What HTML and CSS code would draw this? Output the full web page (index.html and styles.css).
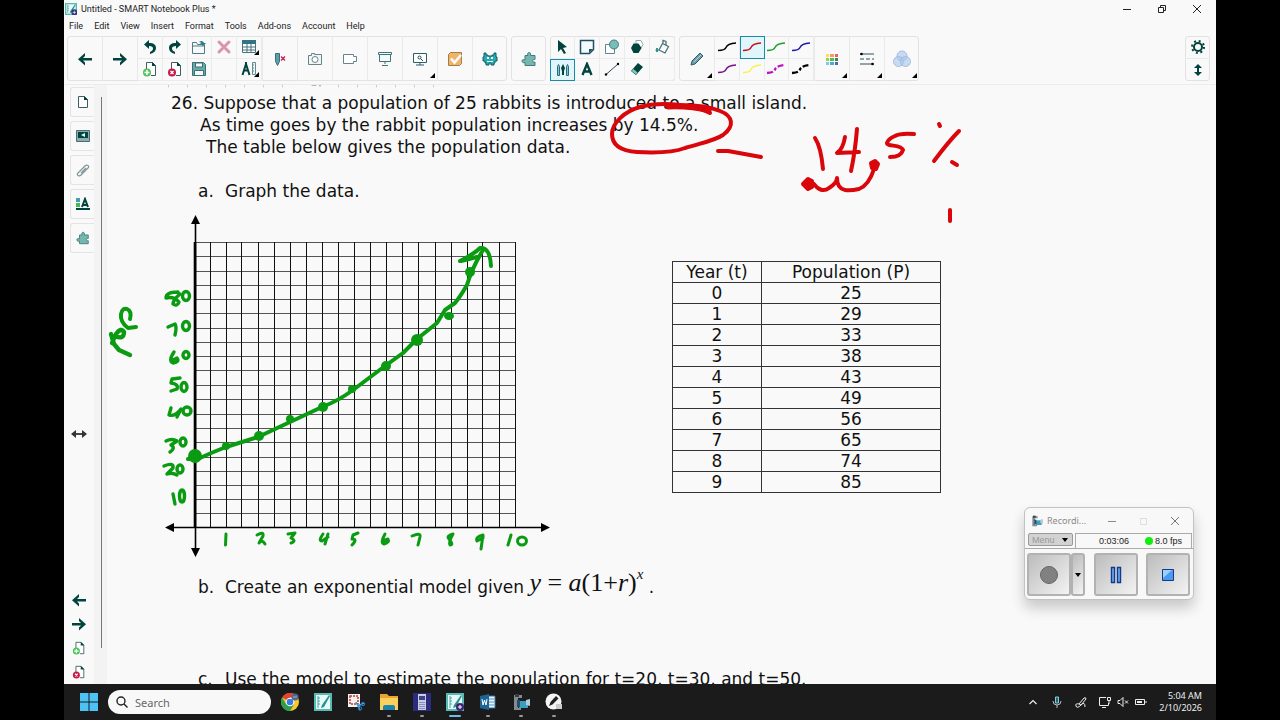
FILE: index.html
```html
<!DOCTYPE html>
<html lang="en">
<head>
<meta charset="utf-8">
<title>Untitled - SMART Notebook Plus *</title>
<link rel="stylesheet" href="styles.css">
</head>
<body>
<svg class="defs" aria-hidden="true">
  <defs>
    <symbol id="left" viewBox="0 0 14 14"><path d="M7 1v3L5 6h9v2.600H5l2 2v3L0 7.300z" fill="#01433d"/></symbol>
    <symbol id="right" viewBox="0 0 14 14"><path d="M7 1v3l2 2H0v2.600h9l-2 2v3l7-6.300z" fill="#01433d"/></symbol>
    <symbol id="undo" viewBox="0 0 16 16"><path d="M7 1v3c5 0 7 2 7 5s-2 5-6 6v-2c2-1 3-2 3-3.500S10 7 7 7v3L2 5.500z" fill="#01433d"/></symbol>
    <symbol id="page-add" viewBox="0 0 16 16"><path d="M4.500 8V1.500h6l3 3v10H9" fill="#fff" stroke="#3d5f62"/><path d="M10 1v4h4z" fill="#01433d"/><circle cx="5" cy="11.500" r="4" fill="#4fc35c"/><path d="M5 9v5M2.500 11.500h5" stroke="#fff" stroke-width="1.500"/></symbol>
    <symbol id="page-del" viewBox="0 0 16 16"><path d="M4.500 8V1.500h6l3 3v10H9" fill="#fff" stroke="#3d5f62"/><path d="M10 1v4h4z" fill="#01433d"/><circle cx="5" cy="11.500" r="4" fill="#c9184a"/><path d="M3.500 10l3 3M6.500 10l-3 3" stroke="#fff" stroke-width="1.400"/></symbol>
    <symbol id="squiggle" viewBox="0 0 20 12"><path d="M1 9.500C5 9.500 8 9 9 6.500S13 2.500 19 2" fill="none" stroke="currentColor" stroke-width="1.500"/></symbol>
    <symbol id="squiggle-thick" viewBox="0 0 20 12"><path d="M1 10C5 9.500 8 9 9 6.500S13 2.500 19 2" fill="none" stroke="currentColor" stroke-width="2.300" stroke-dasharray="6 2 3 2"/></symbol>
    <symbol id="notebook" viewBox="0 0 18 18"><path d="M0 0h18v18H0z" fill="#59b9b4"/><path d="M2 2h14v14H2z" fill="#e6fbf8"/><path d="M4 3v12M4 5h2M4 8h2M4 11h2" stroke="#46a39f"/><path d="M15 2L8 12l-1 3 3-1 6-11z" fill="#2d8f92"/></symbol>
    <symbol id="recorder" viewBox="0 0 18 18"><path d="M2 2h8v3H6v10h3v2H2z" fill="#7f8c92"/><path d="M3 1h4v3H3z" fill="#333f45"/><path d="M7 8h9v7H7z" fill="#3c9cc2"/><path d="M5 7h3v7H5z" fill="#284f5f"/><path d="M14 7l4-1v7l-4-1z" fill="#b3cdd6"/></symbol>
  </defs>
</svg>
<div class="desktop">
  <header class="titlebar">
    <svg class="i12" viewBox="0 0 18 18"><use href="#notebook"/><circle cx="14" cy="14" r="4.500" fill="#30307c"/><path d="M14 11.500v5M11.500 14h5" stroke="#fff"/></svg>
    <h1 class="title">Untitled - SMART Notebook Plus *</h1>
    <div class="window-buttons">
      <button class="bare" aria-label="Minimize"><svg class="i10" viewBox="0 0 10 10"><path d="M1 5.500h8" stroke="#222"/></svg></button>
      <button class="bare" aria-label="Restore"><svg class="i10" viewBox="0 0 10 10"><path d="M1.500 3.500h5v5h-5zM3.500 3V1.500h5v5H7" fill="none" stroke="#222"/></svg></button>
      <button class="bare" aria-label="Close"><svg class="i10" viewBox="0 0 10 10"><path d="M1 1l8 8M9 1L1 9" stroke="#222"/></svg></button>
    </div>
  </header>
  <nav class="menubar">
    <button class="bare">File</button><button class="bare">Edit</button><button class="bare">View</button><button class="bare">Insert</button><button class="bare">Format</button><button class="bare">Tools</button><button class="bare">Add-ons</button><button class="bare">Account</button><button class="bare">Help</button>
  </nav>
  <div class="toolbar">
    <div class="group">
      <button class="tool" aria-label="Previous page"><svg class="i14"><use href="#left"/></svg></button>
      <button class="tool" aria-label="Next page"><svg class="i14"><use href="#right"/></svg></button>
      <div class="pairs">
        <button class="tool" aria-label="Undo"><svg class="i16"><use href="#undo"/></svg></button>
        <button class="tool" aria-label="Redo"><svg class="i16 flip"><use href="#undo"/></svg></button>
        <button class="tool" aria-label="Open"><svg class="i16" viewBox="0 0 16 16"><path d="M1.500 14.500v-11h4l1 2h7v9zM1.500 7h12" fill="#f3fafa" stroke="#567a80"/><path d="M8 3c3-2 4-1 5 1h2l-3 3-3-3h2z" fill="#247f8e"/></svg></button>
        <button class="tool" aria-label="Delete"><svg class="i16" viewBox="0 0 16 16"><path d="M3 3l10 10M13 3L3 13" stroke="#dc93b2" stroke-width="3" stroke-linecap="round"/></svg></button>
        <button class="tool more" aria-label="Table"><svg class="i16" viewBox="0 0 16 16"><path d="M1.500 1.500h13v12h-13zM1.500 8h13M1.500 11h13M6 5v8M10 5v8" fill="#fff" stroke="#49727c"/><path d="M1 1h14v4H1z" fill="#2f7583"/></svg></button>
        <button class="tool" aria-label="Add page"><svg class="i16"><use href="#page-add"/></svg></button>
        <button class="tool" aria-label="Delete page"><svg class="i16"><use href="#page-del"/></svg></button>
        <button class="tool" aria-label="Save"><svg class="i16" viewBox="0 0 16 16"><path d="M1.500 1.500h11l2 2v11h-13z" fill="#69a9ab" stroke="#3d6e74"/><path d="M4.500 2h7v4h-7zM3.500 9.500h9v5h-9z" fill="#f4fafa" stroke="#3d6e74"/></svg></button>
        <span class="tool"></span>
        <button class="tool more" aria-label="Measurement tools"><svg class="i16" viewBox="0 0 16 16"><path d="M5 1v3M5 3L1.500 14M5 3l3.500 11M3 9.500h4" fill="none" stroke="#01433d" stroke-width="2"/><path d="M11.500 1.500h3v12h-3zM12 4h1M12 7h1M12 10h1" fill="#eaf4f4" stroke="#678b90"/></svg></button>
      </div>
      <button class="tool" aria-label="Clear ink"><svg class="i16" viewBox="0 0 16 16"><path d="M3.500 2.500h4v8l-2 4-2-4z" fill="#58a0aa" stroke="#3d6e74"/><path d="M9 5.500l4 4M13 5.500l-4 4" stroke="#c9184a" stroke-width="1.300"/></svg></button>
      <button class="tool" aria-label="Camera"><svg class="i16" viewBox="0 0 16 16"><path d="M1.500 4.500h3v-2h3v1h7v10h-13z" fill="#eff6f6" stroke="#668489"/><circle cx="8" cy="8.500" r="3" fill="#fff" stroke="#668489"/></svg></button>
      <button class="tool" aria-label="Page recorder"><svg class="i16" viewBox="0 0 16 16"><path d="M1.500 3.500h10v2h3v5h-3v2h-10z" fill="#fff" stroke="#668489"/></svg></button>
      <button class="tool" aria-label="Full screen"><svg class="i16" viewBox="0 0 16 16"><path d="M1.500 1.500h13v2h-13zM2.500 3.500h11v7h-11zM8 11v2M5 14.500h6" fill="#f4fbfb" stroke="#3f747c"/></svg></button>
      <button class="tool more" aria-label="Screen capture"><svg class="i16" viewBox="0 0 16 16"><path d="M1.500 2.500h13v9h-13zM4 14h8M8 12v2" fill="#fff" stroke="#2a5f68"/><circle cx="7.500" cy="6.500" r="1.500" fill="none" stroke="#194a53"/><path d="M9 8l2 2" stroke="#194a53"/></svg></button>
      <button class="tool" aria-label="Response"><svg class="i16" viewBox="0 0 16 16"><path d="M1.500 3.500l2-2h11v11l-2 2h-11z" fill="#eeb568" stroke="#a67b45"/><path d="M4 7.500l3.500 4L14 4" fill="none" stroke="#fff" stroke-width="2.500"/></svg></button>
      <button class="tool" aria-label="Game activities"><svg class="i16" viewBox="0 0 16 16"><path d="M2 2h2v2h2v1h4V4h2V2h2v4h1v4h-2v2h-1v2H9v-2H7v2H4v-2H3v-2H1V6h1z" fill="#22adb2" stroke="#155d67"/><path d="M5 6h2v2H5zM9 6h2v2H9zM5 10h6v1H5z" fill="#fff"/></svg></button>
    </div>
    <div class="group">
      <button class="tool" aria-label="Add-ons"><svg class="i16" viewBox="0 0 16 16"><path id="puzzle" d="M4 4.500h3c-2-4 4-4 2.500 0H14v4c-3-1-3 4 0 2.500v3.500H4v-3c-4 1.500-4-4.500 0-2.500z" fill="#75b7ae" stroke="#437c7e"/></svg></button>
    </div>
    <div class="group">
      <div class="pairs">
        <button class="tool" aria-label="Select"><svg class="i14" viewBox="0 0 14 14"><path d="M3 0l9 7-4 1 3 5-2 1-3-5-3 3z" fill="#01433d"/></svg></button>
        <button class="tool" aria-label="Screen shade"><svg class="i16" viewBox="0 0 16 16"><path d="M1.500 1.500h13v9l-4 4h-9z" fill="#f4fbfc" stroke="#1d5063" stroke-width="1.500"/><path d="M10 14v-4h4z" fill="#1d5063"/></svg></button>
        <button class="tool" aria-label="Shapes"><svg class="i16" viewBox="0 0 16 16"><path d="M1.500 5.500h9v9h-9z" fill="#fff" stroke="#668489"/><circle cx="10" cy="5.500" r="4.500" fill="#79bdbb" stroke="#437c7e"/></svg></button>
        <button class="tool" aria-label="Regular polygons"><svg class="i16" viewBox="0 0 16 16"><path d="M7 1.500h5l2 4-3 5H7z" fill="#fff" stroke="#93abb0"/><path d="M4.500 4.500h5l3 4.500-3 5h-5L2 9z" fill="#01433d"/></svg></button>
        <button class="tool" aria-label="Fill"><svg class="i16" viewBox="0 0 16 16"><path d="M8.500 4.500l6 3-3.500 6.500-6-3zM9 4V1.500l3 1V6" fill="#f6fbfb" stroke="#4d7278" stroke-width="1.300"/><path d="M3 9c-3 5 3 5 0 0" fill="#267f86" stroke="#267f86"/></svg></button>
        <button class="tool chosen" aria-label="Pens"><svg class="i16" viewBox="0 0 16 16"><path d="M2.500 13.500v-9l1-2 1 2v9zM11.500 13.500v-9l1-2 1 2v9z" fill="#87c5c8" stroke="#2a6b78"/><path d="M7 13V9l-1-3 2-4 2 4-1 3v4z" fill="#01433d"/></svg></button>
        <button class="tool" aria-label="Text"><svg class="i14" viewBox="0 0 14 14"><path d="M2.500 13L7 2l4.500 11M4 9.500h6" fill="none" stroke="#01433d" stroke-width="2.400"/></svg></button>
        <button class="tool" aria-label="Lines"><svg class="i16" viewBox="0 0 16 16"><path d="M2 13.500L14 3" stroke="#345" stroke-width="1"/><circle cx="2" cy="13.500" r="1.200"/><circle cx="14" cy="3" r="1.200"/></svg></button>
        <button class="tool" aria-label="Eraser"><svg class="i16" viewBox="0 0 16 16"><path d="M9 2l5 4-7 8-5-4z" fill="#01433d"/><path d="M4.500 8l4 3.500L7 13.500 2.500 10z" fill="#8ac2bd"/></svg></button>
        <span class="tool"></span>
      </div>
    </div>
    <div class="group">
      <button class="tool more" aria-label="Pen type"><svg class="i16" viewBox="0 0 16 16"><path d="M2 14l1-4 8-8 3 3-8 8z" fill="#699fa9" stroke="#315b67"/><path d="M5 11l7-7" stroke="#b4d4da"/></svg></button>
      <div class="pairs four">
        <button class="tool" aria-label="Black pen"><svg class="stroke black"><use href="#squiggle"/></svg></button>
        <button class="tool chosen" aria-label="Red pen"><svg class="stroke red"><use href="#squiggle"/></svg></button>
        <button class="tool" aria-label="Green pen"><svg class="stroke green"><use href="#squiggle"/></svg></button>
        <button class="tool" aria-label="Blue pen"><svg class="stroke blue"><use href="#squiggle"/></svg></button>
        <button class="tool" aria-label="Purple pen"><svg class="stroke purple"><use href="#squiggle"/></svg></button>
        <button class="tool" aria-label="Yellow highlighter"><svg class="stroke yellow"><use href="#squiggle"/></svg></button>
        <button class="tool" aria-label="Magenta dashed pen"><svg class="stroke magenta"><use href="#squiggle-thick"/></svg></button>
        <button class="tool" aria-label="Black dashed pen"><svg class="stroke black"><use href="#squiggle-thick"/></svg></button>
      </div>
      <button class="tool more" aria-label="Colour"><svg class="i14" viewBox="0 0 14 14"><path d="M1 2h3v3H1z" fill="#f6e05b"/><path d="M5 2h4v3H5z" fill="#f59a70"/><path d="M10 2h3v3h-3z" fill="#e8606d"/><path d="M1 6h3v3H1z" fill="#96d24a"/><path d="M5 6h4v3H5z" fill="#4fbf4b"/><path d="M10 6h3v3h-3z" fill="#378b45"/><path d="M1 10h3v3H1z" fill="#79cee2"/><path d="M5 10h4v3H5z" fill="#4da9d7"/><path d="M10 10h3v3h-3z" fill="#5a62ae"/></svg></button>
      <button class="tool more" aria-label="Line style"><svg class="i16" viewBox="0 0 16 16"><path d="M1 3h14M1 13h14" stroke="#2b5058"/><path d="M1 8h14" stroke="#2b5058" stroke-dasharray="4 2"/><circle cx="2.500" cy="3" r="1.300"/><circle cx="13.500" cy="13" r="1.300"/></svg></button>
      <button class="tool more" aria-label="Transparency"><svg class="i18" viewBox="0 0 18 18"><g fill="#a3c6ee" fill-opacity=".6" stroke="#a9bddb"><circle cx="9" cy="6" r="5"/><circle cx="5.500" cy="11.500" r="5"/><circle cx="12.500" cy="11.500" r="5"/></g></svg></button>
    </div>
    <div class="group options">
      <button class="tool" aria-label="Customize toolbar"><svg class="i14" viewBox="0 0 14 14"><circle cx="7" cy="7" r="4" fill="none" stroke="#01433d" stroke-width="2"/><circle cx="7" cy="7" r="6" fill="none" stroke="#01433d" stroke-width="2" stroke-dasharray="2 2.710"/></svg></button>
      <button class="tool" aria-label="Move toolbar"><svg class="i12" viewBox="0 0 12 12"><path d="M6 0l4 4H7v4h3l-4 4-4-4h3V4H2z" fill="#01433d"/></svg></button>
    </div>
  </div>

  <main class="workspace">
    <aside class="sidebar">
      <div class="tabs">
        <button class="tab" aria-label="Page sorter"><svg class="i14" viewBox="0 0 14 14"><path d="M2.500 1.500h6l3 3v8h-9z" fill="#fff" stroke="#3d5f62"/><path d="M8 1v4h4z" fill="#01433d"/></svg></button>
        <button class="tab" aria-label="Gallery"><svg class="i14" viewBox="0 0 14 14"><path d="M.500 1.500h13v11H.500z" fill="#8cadb0" stroke="#4c6c70"/><path d="M2 3h10v6H2z" fill="#01433d"/><path d="M5 6l4-2v4z" fill="#dff"/></svg></button>
        <button class="tab" aria-label="Attachments"><svg class="i14" viewBox="0 0 14 14"><path d="M3 9l6-6c2-2 5 0 3 2l-7 7c-2 2-5 0-3-2l6-6M5 10l5-5" fill="none" stroke="#82959a" stroke-width="1.200"/></svg></button>
        <button class="tab" aria-label="Properties"><svg class="i14" viewBox="0 0 14 14"><path d="M0 1h4v4H0z" fill="#489eaa"/><path d="M0 6h4v4H0z" fill="#42ba55"/><path d="M0 12h14" stroke="#01433d" stroke-width="2"/><path d="M6 10l3-8 3 8M7 8h4" fill="none" stroke="#01433d" stroke-width="2"/></svg></button>
        <button class="tab" aria-label="Add-ons"><svg class="i14" viewBox="0 0 16 16"><use href="#puzzle"/></svg></button>
      </div>
      <button class="bare" aria-label="Move side bar"><svg class="wide" viewBox="0 0 18 12"><path d="M3 6h12" stroke="#333" stroke-width="1.800"/><path d="M6 2v8L1 6zM12 2v8l5-4z" fill="#333"/></svg></button>
      <div class="page-nav">
        <button class="bare" aria-label="Back"><svg class="i14"><use href="#left"/></svg></button>
        <button class="bare" aria-label="Forward"><svg class="i14"><use href="#right"/></svg></button>
        <button class="bare" aria-label="Insert page"><svg class="i14"><use href="#page-add"/></svg></button>
        <button class="bare" aria-label="Remove page"><svg class="i14"><use href="#page-del"/></svg></button>
      </div>
    </aside>
    <div class="gutter"><div class="gutter-line"></div></div>

    <article class="page">
      <div class="problem">
        <p class="first">26. Suppose that a population of 25 rabbits is introduced to a small island.</p>
        <p class="second">As time goes by the rabbit population increases by 14.5%.</p>
        <p class="third">The table below gives the population data.</p>
      </div>
      <p class="part"><span class="letter">a.</span><span>Graph the data.</span></p>
      <div class="figures">
        <svg class="chart" viewBox="165 213 386 343" role="img" aria-label="Empty coordinate grid">
          <g fill="none" shape-rendering="crispEdges">
            <path d="M195 241.500h321M195 255.500h321M195 270.500h321M195 284.500h321M195 298.500h321M195 312.500h321M195 327.500h321M195 341.500h321M195 355.500h321M195 369.500h321M195 384.500h321M195 398.500h321M195 413.500h321M195 427.500h321M195 441.500h321M195 456.500h321M195 470.500h321M195 484.500h321M195 498.500h321M195 512.500h321" stroke="#555"/>
            <path d="M210.500 241v285M226.500 241v285M241.500 241v285M258.500 241v285M274.500 241v285M290.500 241v285M306.500 241v285M322.500 241v285M338.500 241v285M354.500 241v285M370.500 241v285M386.500 241v285M402.500 241v285M418.500 241v285M435.500 241v285M451.500 241v285M467.500 241v285M482.500 241v285M499.500 241v285M515.500 241v285" stroke="#111"/>
          </g>
          <path d="M195 241v286" stroke="#000" stroke-width="2.600"/>
          <path d="M195.500 220v330M172 526.500h373" stroke="#000" stroke-width="1.600"/>
          <path d="M195.500 214l4.500 9h-9zM195.500 556l4.500-9h-9zM165 526.500l9-4.500v9zM550 526.500l-9-4.500v9z"/>
        </svg>
        <table class="data">
          <thead><tr><th scope="col">Year (t)</th><th scope="col">Population (P)</th></tr></thead>
          <tbody>
            <tr><td>0</td><td>25</td></tr>
            <tr><td>1</td><td>29</td></tr>
            <tr><td>2</td><td>33</td></tr>
            <tr><td>3</td><td>38</td></tr>
            <tr><td>4</td><td>43</td></tr>
            <tr><td>5</td><td>49</td></tr>
            <tr><td>6</td><td>56</td></tr>
            <tr><td>7</td><td>65</td></tr>
            <tr><td>8</td><td>74</td></tr>
            <tr><td>9</td><td>85</td></tr>
          </tbody>
        </table>
      </div>
      <p class="part model"><span class="letter">b.</span><span>Create an exponential model given <span class="formula"><i>y</i> = <i>a</i>(1+<i>r</i>)<sup><i>x</i></sup></span> .</span></p>
      <p class="part estimate"><span class="letter">c.</span><span>Use the model to estimate the population for t=20, t=30, and t=50.</span></p>

      <svg class="ink" aria-label="Handwritten notes">
        <g transform="translate(-107 -85)" fill="none" stroke-linecap="round" stroke-linejoin="round">
          <path d="M168.500 85v2M187.500 85v2M206.500 85v2M225.500 85v2M244.500 85v2M263.500 85v2M282.500 85v2M338.500 85v2M357.500 85v2M376.500 85v2M395.500 85v2M414.500 85v2M433.500 85v2" stroke="#ccc"/>
          <path d="M312 85h4M320 85v1" stroke="#777"/>
          <g stroke="#d9060c" stroke-width="4">
            <path d="M710 113Q699 107 687 107C677 103 653 103 640 107C625 111 612 123 612 134C612 146 622 151 637 152C655 153 672 153 685 148C701 143 714 141 723 135C735 126 733 116 720 111Q706 105 680 105"/>
            <path d="M668 107Q690 106 709 111" stroke-width="5"/>
            <path d="M718 151L728 151L761 157"/>
            <path d="M815 138Q821 147 823 169M845 137Q843 149 837 153L859 152M857 129Q855 153 851 171"/>
            <path d="M914 134Q900 133 895 136Q888 139 887 143C887 147 901 144 903 150Q901 157 890 157"/>
            <path d="M939 124L940 126M959 131Q949 141 934 161M952 162L957 165"/>
            <path d="M814 184C818 190 824 192 829 188Q837 183 837 178C837 193 850 191 859 189Q869 185 874 169"/>
            <path d="M950 210V221"/>
            <path d="M803 184L808 179L812 181L812 187L808 189zM871 163L875 161L878 164L876 169L872 168z" fill="#d9060c"/>
          </g>
          <g stroke="#0b9b12" stroke-width="4">
            <path d="M188 459L200 458Q213 452 226 447L258 437L290 422L322 407Q338 401 353 390L385 366L403 353L417 339L437 323L445 310L455 303Q460 297 467 285Q472 268 483 250"/>
            <path d="M460 261Q474 254 480 248Q490 247 491 266M461 261L477 257"/>
            <g fill="#0b9b12" stroke="none"><circle cx="195" cy="456" r="7"/><circle cx="226" cy="446" r="4"/><circle cx="259" cy="436" r="5"/><circle cx="290" cy="419" r="4"/><circle cx="323" cy="407" r="5"/><circle cx="352" cy="389" r="4"/><circle cx="386" cy="366" r="5"/><circle cx="417" cy="340" r="6"/><ellipse cx="449" cy="316" rx="5" ry="4"/><circle cx="470" cy="272" r="5"/></g>
            <g stroke-width="3.400">
              <path d="M178 292Q166 292 166 298Q174 296 179 302Q177 307 173 304Q173 300 180 294"/><ellipse cx="186" cy="296" rx="3.500" ry="4.500"/>
              <path d="M168 327L175 324Q177 327 175 335"/><ellipse cx="186" cy="326" rx="3.500" ry="4.500"/>
              <path d="M174 352Q168 361 173 363Q180 362 177 358L173 360"/><ellipse cx="186" cy="355" rx="3" ry="3.500"/>
              <path d="M180 378L172 379L171 383Q179 384 177 389L171 391"/><ellipse cx="184" cy="387" rx="3" ry="4.500"/>
              <path d="M171 408L169 415Q175 417 181 409L177 417"/><ellipse cx="187" cy="411" rx="4" ry="4"/>
              <path d="M166 441Q172 438 177 441L171 445Q176 448 170 452"/><ellipse cx="183" cy="442" rx="3" ry="4"/>
              <path d="M164 466Q174 462 173 468L167 474Q172 472 177 475"/><ellipse cx="180" cy="469" rx="3" ry="4"/>
              <path d="M173 494L175 504"/><ellipse cx="182" cy="496" rx="2.500" ry="6"/>
            </g>
            <path d="M136 327L128 328Q120 322 121 314Q122 308 127 309Q132 311 130 319"/><path d="M111 334L114 344L119 350L130 355M112 343L115 336Q124 340 124 332Q121 327 116 334" stroke-width="4.400"/>
            <g stroke-width="3">
              <path d="M226 534L225.500 545"/>
              <path d="M257 535Q264 531 263 536L259 543Q262 539 265 544"/>
              <path d="M288 534L295 533L291 538Q297 541 291 543"/>
              <path d="M323 534Q318 541 322 541L328 537M328 534L325 544"/>
              <path d="M358 533L353 535L352 539Q358 539 352 545"/>
              <path d="M385 534Q380 543 384 544Q390 542 388 539L383 541"/>
              <path d="M412 536Q421 532 420 537L418 545"/>
              <path d="M453 534Q446 536 449 539Q454 545 450 545Q448 543 453 534"/>
              <path d="M483 535Q475 537 477 541L483 538V535L481 549"/>
              <path d="M511 535L508 545"/><ellipse cx="522" cy="541" rx="4.500" ry="4"/>
            </g>
          </g>
        </g>
      </svg>
    </article>

    <section class="recorder" aria-label="Recording">
      <div class="rec-title">
        <svg class="i12"><use href="#recorder"/></svg><span>Recordi...</span>
        <button class="bare" aria-label="Minimize"><svg class="i10" viewBox="0 0 10 10"><path d="M1 5.500h8" stroke="#888"/></svg></button>
        <button class="bare" aria-label="Maximize" disabled><svg class="i10" viewBox="0 0 10 10"><path d="M1.500 2.500h6v6h-6z" fill="none" stroke="#ddd"/></svg></button>
        <button class="bare" aria-label="Close"><svg class="i10" viewBox="0 0 10 10"><path d="M1 1l8 8M9 1L1 9" stroke="#777"/></svg></button>
      </div>
      <div class="rec-status">
        <button class="rec-menu" aria-haspopup="menu">Menu<svg class="caret" viewBox="0 0 6 4"><path d="M0 0h6L3 4z"/></svg></button>
        <div class="rec-info"><span>0:03:06</span><span class="fps">8.0 fps</span></div>
      </div>
      <div class="rec-controls">
        <div class="split">
          <button class="rec-button" aria-label="Record" disabled><svg class="i20" viewBox="0 0 20 20"><circle cx="10" cy="10" r="8.500" fill="#818181" stroke="#666"/></svg></button><button class="rec-button narrow" aria-label="Record options"><svg class="caret" viewBox="0 0 6 4"><path d="M0 0h6L3 4z"/></svg></button>
        </div>
        <button class="rec-button" aria-label="Pause"><svg class="i18" viewBox="0 0 18 18"><path d="M4.500 1.500h3v15h-3zM10.500 1.500h3v15h-3z" fill="#72acf0" stroke="#123a8c" stroke-width="1.400"/></svg></button>
        <button class="rec-button" aria-label="Stop"><svg class="i14" viewBox="0 0 14 14"><path d="M1.500 1.500h11v11h-11z" fill="#4c9aee" stroke="#123a8c"/><path d="M2 2h9L2 10z" fill="#9cd0fb"/></svg></button>
      </div>
    </section>
  </main>

  <footer class="taskbar">
    <button class="task" aria-label="Start"><svg class="i18" viewBox="0 0 18 18"><path d="M0 0h8.500v8.500H0zM9.500 0H18v8.500H9.500zM0 9.500h8.500V18H0zM9.500 9.500H18V18H9.500z" fill="#4cc2f5"/></svg></button>
    <label class="search"><svg class="i12" viewBox="0 0 12 12"><circle cx="5" cy="5" r="4" fill="none" stroke="#222" stroke-width="1.400"/><path d="M8 8l3.500 3.500" stroke="#222" stroke-width="1.400"/></svg><input type="search" placeholder="Search" aria-label="Search"></label>
    <button class="task" aria-label="Chrome"><svg class="i18" viewBox="0 0 18 18"><circle cx="9" cy="9" r="9" fill="#f7c82f"/><path d="M9 9L1.200 4.500A9 9 0 0116.800 4.500H9z" fill="#e34133"/><path d="M1.200 4.500A9 9 0 009 18l4-6.500L9 13 5 11z" fill="#2f9e4c"/><circle cx="9" cy="9" r="4.300" fill="#fff"/><circle cx="9" cy="9" r="3.300" fill="#3c79e6"/><circle cx="14" cy="4" r="3.500" fill="#526784"/><path d="M12 4h4" stroke="#aac"/></svg></button>
    <button class="task" aria-label="Notebook"><svg class="i18"><use href="#notebook"/></svg></button>
    <button class="task" aria-label="Snipping tool"><svg class="i18" viewBox="0 0 18 18"><path d="M1 1h12v13H1z" fill="#f3f0ee"/><path d="M3 3h8v8H3z" fill="none" stroke="#b33e36" stroke-width="1.500" stroke-dasharray="2 1"/><path d="M17 10l-6 3M9 9l4 8" stroke="#2f9fd8" stroke-width="1.500"/><circle cx="16" cy="11" r="1.700" fill="none" stroke="#2f7fc8"/><circle cx="13" cy="15.500" r="1.700" fill="none" stroke="#2f7fc8"/></svg></button>
    <button class="task open" aria-label="File Explorer"><svg class="i18" viewBox="0 0 18 18"><path d="M0 1h7l2 2h9v14H0z" fill="#e9a534"/><path d="M0 5h18v12H0z" fill="#fbd05d"/><path d="M3 17v-3q0-2 2-2h8q2 0 2 2v3z" fill="#1b85af"/></svg></button>
    <button class="task open" aria-label="Calculator"><svg class="i18" viewBox="0 0 18 18"><path d="M0 0h18v18H0z" fill="#2d2b7d"/><path d="M5 1h8v16H5z" fill="#c8cde7"/><path d="M6 3h6v4H6z" fill="#3d438b"/><path d="M7 9v7M9 9v7M11 9v7" stroke="#4b5193" stroke-dasharray="1 1"/></svg></button>
    <button class="task open active" aria-label="SMART Notebook"><svg class="i18" viewBox="0 0 18 18"><use href="#notebook"/><circle cx="14" cy="14" r="4" fill="#422372"/><path d="M14 12v4M12 14h4" stroke="#fff"/></svg></button>
    <button class="task open" aria-label="Word"><svg class="i18" viewBox="0 0 18 18"><path d="M8 3h8v12H8z" fill="#eaf4fb" stroke="#316f9d"/><path d="M10 6h5M10 9h5M10 12h5" stroke="#5991b6"/><path d="M1 3l9-2v16l-9-2z" fill="#1d6496"/><path d="M3 6l1 6 1.500-5L7 12l1-6" fill="none" stroke="#fff"/></svg></button>
    <button class="task open" aria-label="Recorder"><svg class="i18"><use href="#recorder"/></svg></button>
    <button class="task open" aria-label="Ink"><svg class="i18" viewBox="0 0 18 18"><circle cx="8.500" cy="8.500" r="8" fill="#f5f5f5"/><path d="M4 13l1.500-4L11 3l2.500 2.500-6 6z" fill="#222"/><path d="M11 11h6v5h-6z" fill="#ccc"/></svg></button>
    <div class="tray">
      <svg class="i12" viewBox="0 0 12 12"><path d="M2.500 8L6 4.500 9.500 8" fill="none" stroke="#eee" stroke-width="1.200"/></svg>
      <svg class="i12" viewBox="0 0 12 12"><path d="M4.500 1h3v6h-3z" fill="#27616c" stroke="#7ed1dc"/><path d="M2 5q0 4 4 4t4-4M6 9v3" fill="none" stroke="#bbb"/></svg>
      <svg class="i12" viewBox="0 0 12 12"><path d="M4 8l5-6q2-1 2 1L6 9zM4 8q-4-1-3 2t5-1 4 2" fill="none" stroke="#eee"/></svg>
      <svg class="i12" viewBox="0 0 12 12"><path d="M7 1.500H.500v8h9V7M3 11.500h4" fill="none" stroke="#eee"/><path d="M8.500 1.500h3v3h-3zM10 5v3" fill="none" stroke="#eee"/></svg>
      <svg class="i12" viewBox="0 0 12 12"><path d="M1 4.500h2l3-3v9l-3-3H1zM8 4.500l3 3M11 4.500l-3 3" fill="none" stroke="#eee"/></svg>
      <svg class="i12" viewBox="0 0 12 12"><path d="M.500 3.500h9v5h-9zM11 5v2" fill="none" stroke="#eee"/><path d="M2 5h5v2H2z" fill="#eee"/></svg>
    </div>
    <div class="clock"><time>5:04 AM</time><time>2/10/2026</time></div>
  </footer>
</div>
</body>
</html>
```
FILE: styles.css
```css
* { box-sizing: border-box; }
body { margin: 0; background: #000; font-family: "Noto Sans", sans-serif; font-size: 9px; color: #222; }
p, h1 { margin: 0; font-weight: normal; }
svg { display: block; flex: none; }
button { font: inherit; color: inherit; border: 0; padding: 0; margin: 0; background: none; }
.defs { position: absolute; width: 0; height: 0; }
.bare { display: flex; align-items: center; justify-content: center; }

.i10 { width: 10px; height: 10px; }
.i12 { width: 12px; height: 12px; }
.i14 { width: 14px; height: 14px; }
.i16 { width: 16px; height: 16px; }
.i18 { width: 18px; height: 18px; }
.i20 { width: 20px; height: 20px; }
.wide { width: 18px; height: 12px; }
.caret { width: 6px; height: 4px; }
.flip { transform: scaleX(-1); }

.desktop { display: flex; flex-direction: column; height: 100vh; margin: 0 5%; background: #f9f9f9; overflow: hidden; }
.titlebar { display: flex; align-items: center; gap: 4px; height: 17px; padding-left: 1px; font-family: Roboto, sans-serif; }
.title { flex: 1; font-size: 9px; }
.window-buttons { display: flex; gap: 25px; padding-right: 14px; }
.menubar { display: flex; gap: 11px; height: 17px; padding-left: 5px; font-family: Roboto, sans-serif; }

.toolbar { display: flex; gap: 4px; padding: 2px 6px 3px 3px; border-bottom: 1px solid #ececec; }
.group { display: flex; outline: 1px solid #e2e2e2; outline-offset: -1px; border-radius: 3px; height: 45px; }
.group > .tool { width: 35px; }
.group > * + * { border-left: 1px solid #e9e9e9; }
.tool { position: relative; display: flex; align-items: center; justify-content: center; }
.pairs { display: grid; width: 125px; grid-template-columns: repeat(5, 1fr); grid-template-rows: 1fr 1fr; }
.four { width: 100px; grid-template-columns: repeat(4, 1fr); }
.pairs .tool { border-right: 1px solid #ebebeb; border-bottom: 1px solid #ebebeb; }
.pairs .chosen { border: 1px solid #168bab; background: #e1f6fa; }
.more::after { content: ""; position: absolute; right: 2px; bottom: 3px; border-left: 5px solid transparent; border-bottom: 5px solid #000; }
.options { flex-direction: column; margin-left: auto; }
.options > .tool { width: 25px; flex: 1; }
.options > * + * { border-left: 0; border-top: 1px solid #e9e9e9; }
.stroke { width: 20px; height: 12px; }
.black { color: #000; }
.red { color: #c8101c; }
.green { color: #279a38; }
.blue { color: #2118b4; }
.purple { color: #76128a; }
.yellow { color: #f7f254; }
.magenta { color: #c20cc8; }

.workspace { position: relative; flex: 1; min-height: 0; display: flex; overflow: hidden; }
.sidebar { width: 30px; display: flex; flex-direction: column; justify-content: space-between; padding-top: 2px; }
.sidebar > .bare { padding-top: 22px; }
.tabs { display: grid; gap: 4px; padding-left: 6px; }
.tab { display: flex; align-items: center; justify-content: center; height: 30px; border: 1px solid #e4e4e4; border-right: 0; border-radius: 3px 0 0 3px; }
.page-nav { display: grid; gap: 10px; padding-bottom: 5px; }
.gutter { width: 13px; padding: 12px 5px 36px 7px; background: #f3f3f3; }
.gutter-line { height: 100%; border-right: 1px solid #777; }

.page { position: relative; flex: 1; min-width: 0; padding-top: 7px; overflow: hidden; font-family: "DejaVu Sans", sans-serif; font-size: 17px; line-height: 22px; color: #111; white-space: nowrap; }
.first { padding-left: 64px; }
.second { padding-left: 93px; }
.third { padding-left: 99px; }
.part { display: flex; align-items: baseline; padding-left: 91px; margin-top: 22px; }
.letter { width: 27px; }
.figures { display: flex; align-items: flex-start; padding: 12px 0 0 58px; }
.chart { width: 386px; height: 343px; }
.data { margin: 47px 0 0 121px; width: 269px; table-layout: fixed; border-collapse: collapse; font-size: 17px; line-height: 20px; text-align: center; }
.data th, .data td { border: 1px solid #333; padding: 0; font-weight: normal; }
.data th:first-child { width: 89px; }
.model { height: 22px; margin-top: 16px; }
.estimate { margin-top: 73px; }
.formula { font-family: "Liberation Serif", serif; font-size: 26px; line-height: 20px; vertical-align: 2px; }
.formula sup { font-size: 15px; line-height: 0; vertical-align: 12px; }
.ink { position: absolute; inset: 0; width: 100%; height: 100%; pointer-events: none; }

.recorder { position: absolute; right: 22px; bottom: 84px; width: 170px; border: 1px solid #c2c2c2; border-radius: 6px; background: #f8f8f8; box-shadow: 0 8px 14px rgba(0, 0, 0, .2); }
.rec-title { display: flex; align-items: center; gap: 4px; height: 25px; padding: 0 13px 0 6px; color: #888; }
.rec-title span { flex: 1; }
.rec-title .bare { width: 31px; justify-content: flex-end; }
.rec-status { display: flex; gap: 2px; height: 16px; padding: 0 1px 0 3px; border-bottom: 1px solid #aaa; font-family: "Liberation Sans", sans-serif; }
.rec-menu { display: flex; align-items: center; justify-content: space-between; width: 45px; height: 13px; padding: 0 4px 0 3px; border: 1px solid #999; border-radius: 2px; background: #d2d2d2; color: #999; }
.rec-menu .caret { color: #000; }
.rec-info { flex: 1; display: flex; align-items: center; justify-content: space-between; border: 1px solid #aaa; border-bottom: 0; padding: 0 9px 0 23px; }
.fps { display: flex; align-items: center; gap: 2px; }
.fps::before { content: ""; width: 8px; height: 8px; border-radius: 50%; background: #12ee12; }
.rec-controls { display: flex; justify-content: space-between; padding: 4px 3px 3px 2px; }
.split { display: flex; }
.rec-button { display: flex; align-items: center; justify-content: center; width: 44px; height: 43px; border: 2px solid #b2b2b2; border-radius: 3px; background: linear-gradient(135deg, #bcbcbc, #f3f3f3); }
.narrow { width: 14px; }

.taskbar { display: flex; align-items: center; gap: 3px; height: 36px; padding: 0 14px 0 8px; background: #1b1b1b; color: #eee; }
.task { position: relative; display: flex; align-items: center; justify-content: center; width: 30px; height: 36px; }
.taskbar > .task:first-child { width: 33px; }
.search { display: flex; align-items: center; gap: 7px; width: 163px; height: 24px; padding: 0 8px; border-radius: 12px; background: #f8f8f8; }
.search input { flex: 1; min-width: 0; border: 0; padding: 0; background: none; font: inherit; font-size: 11px; outline: 0; }
.search input::placeholder { color: #666; opacity: 1; }
.search + .task { margin-left: 1px; }
.open::after { content: ""; position: absolute; left: 13px; right: 13px; bottom: 3px; height: 2px; border-radius: 1px; background: #999; }
.active::after { left: 9px; right: 9px; background: #69bdf0; }
.tray { display: flex; align-items: center; gap: 12px; margin-left: auto; margin-right: 9px; }
.tray svg:nth-child(n+5) { margin-left: -6px; }
.clock { display: grid; text-align: right; line-height: 12px; font-size: 9px; }
```
